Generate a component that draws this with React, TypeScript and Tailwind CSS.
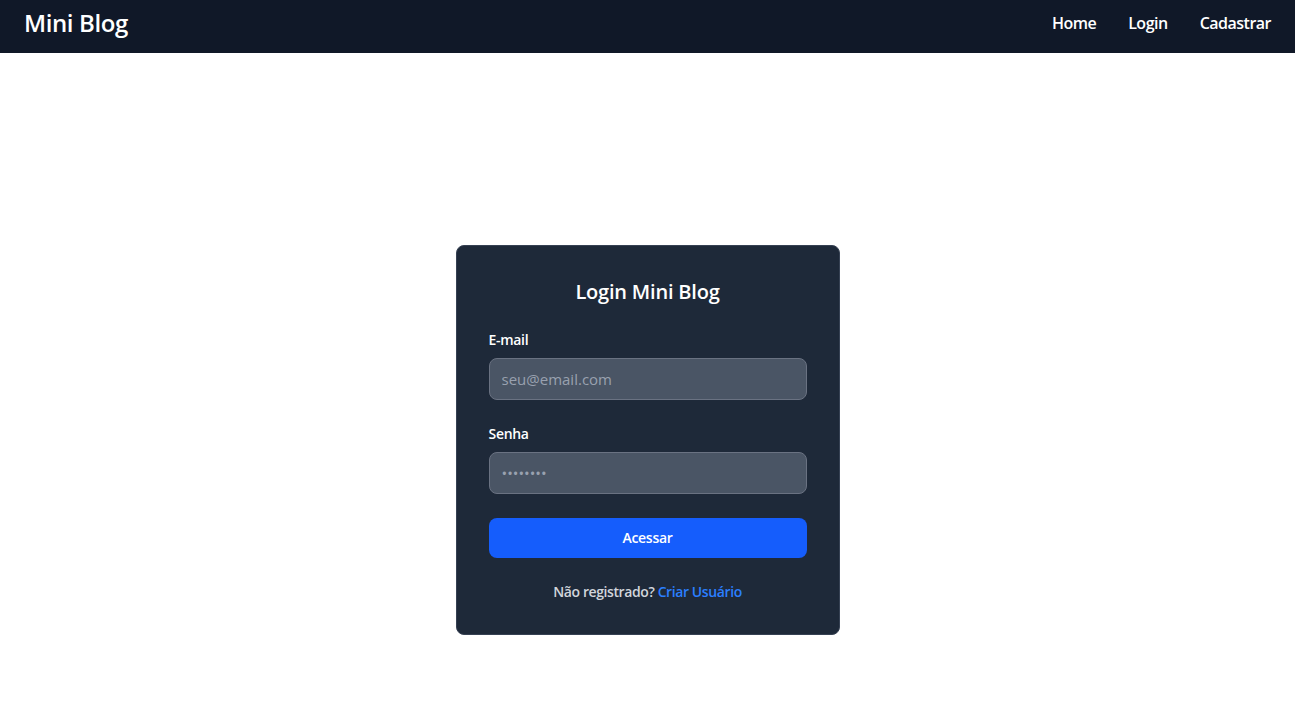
const App = () => {
  return (
    <div className="min-h-screen bg-white font-['Open_Sans',sans-serif]">
      <nav className="flex h-[53px] items-center justify-between bg-[#101828] px-6 pb-2">
        <span className="text-2xl font-semibold tracking-[-0.4px] text-white">Mini Blog</span>
        <div className="flex gap-8">
          <a className="font-semibold tracking-[-0.5px] text-white">Home</a>
          <a className="font-semibold tracking-[-0.5px] text-white">Login</a>
          <a className="font-semibold tracking-[-0.5px] text-white">Cadastrar</a>
        </div>
      </nav>

      <div className="flex justify-center pt-[192px]">
        <div className="w-96 rounded-lg border border-[#364153] bg-[#1e2939] p-8">
          <h1 className="mb-6 text-center text-xl font-semibold tracking-[-0.2px] text-white">
            Login Mini Blog
          </h1>
          <div className="mb-6">
            <label className="mb-2 block text-sm font-semibold tracking-[-0.3px] text-white">E-mail</label>
            <input
              type="email"
              placeholder="seu@email.com"
              className="w-full rounded-lg border border-[#6a7282] bg-[#4a5565] px-3 py-2 text-[15px] leading-6 text-white placeholder:text-[#99a1af] outline-none"
            />
          </div>
          <div className="mb-6">
            <label className="mb-2 block text-sm font-semibold tracking-[-0.3px] text-white">Senha</label>
            <input
              type="password"
              placeholder="••••••••"
              className="w-full rounded-lg border border-[#6a7282] bg-[#4a5565] px-3 py-2 text-[15px] leading-6 text-white placeholder:text-[#99a1af] outline-none"
            />
          </div>
          <button className="w-full rounded-lg bg-[#155dfc] py-2.5 text-sm font-semibold tracking-[-0.3px] text-white">
            Acessar
          </button>
          <p className="mt-6 text-center text-sm font-semibold tracking-[-0.4px] text-[#d1d5dc]">
            Não registrado? <a className="text-[#2b7fff]">Criar Usuário</a>
          </p>
        </div>
      </div>
    </div>
  );
};

export default App;
